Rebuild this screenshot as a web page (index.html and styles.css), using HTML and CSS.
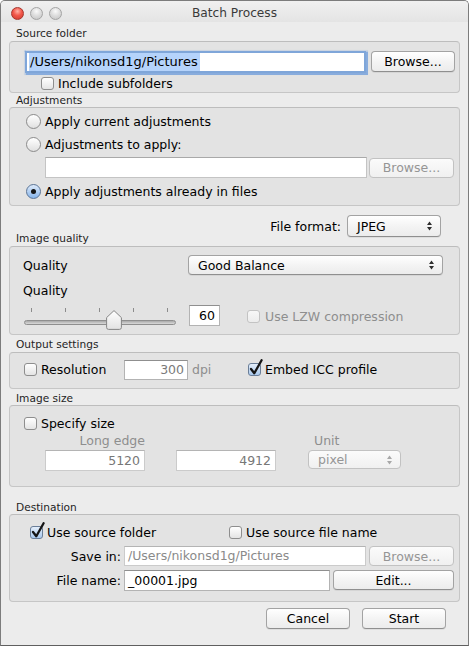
FILE: index.html
```html
<!DOCTYPE html>
<html lang="en">
<head>
<meta charset="utf-8">
<title>Batch Process</title>
<link rel="stylesheet" href="styles.css">
</head>
<body>
<div class="window">
  <div class="titlebar">
    <div class="lights"><span class="light close"></span><span class="light"></span><span class="light"></span></div>
    <div class="title">Batch Process</div>
    <div></div>
  </div>
  <div class="content">
    <div class="section-label l-source">Source folder</div>
    <div class="box box-source">
      <div class="row r-path">
        <div class="field focused path"><span class="sel">/Users/nikonsd1g/Pictures</span></div>
        <div class="btn browse">Browse...</div>
      </div>
      <div class="row r-sub"><span class="check"></span><span>Include subfolders</span></div>
    </div>

    <div class="section-label l-adjust">Adjustments</div>
    <div class="box box-adjust">
      <div class="row r-radio"><span class="radio"></span><span>Apply current adjustments</span></div>
      <div class="row r-radio r-gap6"><span class="radio"></span><span>Adjustments to apply:</span></div>
      <div class="row r-adjfield">
        <div class="field adjfield"></div>
        <div class="btn disabled browse2">Browse...</div>
      </div>
      <div class="row r-radio r-gap5"><span class="radio on"></span><span>Apply adjustments already in files</span></div>
    </div>

    <div class="format-row">
      <div class="section-label">Image quality</div>
      <div class="format">
        <span>File format:</span>
        <div class="btn popup jpeg"><span>JPEG</span><svg class="arrows" width="5" height="10" viewBox="0 0 5 10"><path d="M0 4 L2.5 0.5 L5 4 Z M0 6 L2.5 9.5 L5 6 Z"/></svg></div>
      </div>
    </div>
    <div class="box box-quality">
      <div class="row r-quality">
        <span>Quality</span>
        <div class="btn popup balance"><span>Good Balance</span><svg class="arrows" width="5" height="10" viewBox="0 0 5 10"><path d="M0 4 L2.5 0.5 L5 4 Z M0 6 L2.5 9.5 L5 6 Z"/></svg></div>
      </div>
      <div class="row r-quality2"><span>Quality</span></div>
      <div class="row r-slider">
        <div class="slider">
          <div class="ticks"><span></span><span></span><span></span><span></span><span></span></div>
          <div class="track"></div>
          <svg class="knob" width="16" height="20" viewBox="0 0 16 20">
            <defs><linearGradient id="kg" x1="0" y1="0" x2="0" y2="1"><stop offset="0" stop-color="#ffffff"/><stop offset="1" stop-color="#e2e2e2"/></linearGradient></defs>
            <path d="M8 0.6 L15.4 7.6 L15.4 17.4 Q15.4 19.4 13.4 19.4 L2.6 19.4 Q0.6 19.4 0.6 17.4 L0.6 7.6 Z" fill="url(#kg)" stroke="#858585" stroke-width="1"/>
          </svg>
        </div>
        <div class="field num">60</div>
        <span class="check disabled lzw"></span><span class="dim">Use LZW compression</span>
      </div>
    </div>

    <div class="section-label l-output">Output settings</div>
    <div class="box box-output">
      <div class="row r-output">
        <span class="check"></span><span class="res-label">Resolution</span>
        <div class="field dpi-field">300</div>
        <span class="dim dpi">dpi</span>
        <span class="check on"><svg width="14" height="18" viewBox="0 0 14 18"><path d="M2 10 L5.3 14.2 L12.6 1.2" fill="none" stroke="#151515" stroke-width="2.3" stroke-linecap="round" stroke-linejoin="round"/></svg></span><span>Embed ICC profile</span>
      </div>
    </div>

    <div class="section-label l-size">Image size</div>
    <div class="box box-size">
      <div class="row r-specify"><span class="check"></span><span>Specify size</span></div>
      <div class="row r-sizelabels dim"><span class="lbl-long">Long edge</span><span class="lbl-unit">Unit</span></div>
      <div class="row r-sizefields">
        <div class="field size-field">5120</div>
        <div class="field size-field second">4912</div>
        <div class="btn popup disabled unit"><span>pixel</span><svg class="arrows" width="5" height="10" viewBox="0 0 5 10"><path d="M0 4 L2.5 0.5 L5 4 Z M0 6 L2.5 9.5 L5 6 Z"/></svg></div>
      </div>
    </div>

    <div class="section-label l-dest">Destination</div>
    <div class="box box-dest">
      <div class="row r-dest1">
        <div class="row dest-opt1"><span class="check on"><svg width="14" height="18" viewBox="0 0 14 18"><path d="M2 10 L5.3 14.2 L12.6 1.2" fill="none" stroke="#151515" stroke-width="2.3" stroke-linecap="round" stroke-linejoin="round"/></svg></span><span>Use source folder</span></div>
        <div class="row"><span class="check"></span><span>Use source file name</span></div>
      </div>
      <div class="row r-save">
        <span class="form-label">Save in:</span>
        <div class="field save-field">/Users/nikonsd1g/Pictures</div>
        <div class="btn disabled browse3">Browse...</div>
      </div>
      <div class="row r-fname">
        <span class="form-label">File name:</span>
        <div class="field fname-field">_00001.jpg</div>
        <div class="btn edit">Edit...</div>
      </div>
    </div>

    <div class="row actions">
      <div class="btn action">Cancel</div>
      <div class="btn action">Start</div>
    </div>
  </div>
</div>
</body>
</html>
```

FILE: styles.css
```css
* { box-sizing: border-box; margin: 0; padding: 0; }
html, body { width: 469px; height: 646px; overflow: hidden; background: #ffffff; }
body { font-family: "DejaVu Sans", "Liberation Sans", sans-serif; font-size: 12.5px; color: #000; }

.window {
  width: 469px; height: 646px;
  border: 1px solid #7c7c7c;
  border-bottom-color: #5f5f5f;
  border-radius: 5px 5px 0 0;
  background: #ececec;
  overflow: hidden;
}

.titlebar {
  height: 21px;
  display: grid;
  grid-template-columns: 1fr auto 1fr;
  align-items: start;
  background: linear-gradient(#f0f0f0, #e4e4e4);
}
.lights { display: flex; gap: 6px; padding: 6px 0 0 10px; }
.light {
  width: 13px; height: 13px; border-radius: 50%;
  border: 1px solid #a4a4a4;
  background: radial-gradient(circle at 50% 30%, #fafafa 0, #dedede 45%, #c2c2c2 100%);
}
.light.close {
  border-color: #a8352c;
  background: radial-gradient(circle at 50% 30%, #ffb2a6 0, #f2574a 45%, #cc3a2f 100%);
}
.title { font-size: 12.2px; line-height: 21px; padding-top: 2px; color: #3a3a3a; }

.content { padding: 0 8px; }

.section-label { font-size: 10.6px; line-height: 15px; height: 15px; padding-left: 7px; color: #1e1e1e; }
.l-source { margin-top: 4px; }
.l-adjust { height: 14px; line-height: 14px; }
.l-output { margin-top: 2px; }
.l-size { margin-top: 2px; height: 14px; line-height: 14px; }
.l-dest { margin-top: 13px; height: 14px; line-height: 14px; }

.box {
  border: 1px solid #c6c6c6;
  border-top-color: #bdbdbd;
  border-radius: 4px;
  background: #e3e3e3;
}

.row { display: flex; align-items: center; white-space: nowrap; }

/* controls */
.field {
  background: #ffffff;
  border: 1px solid #b3b3b3;
  border-top-color: #8f8f8f;
  padding: 0 3px;
  line-height: 18px;
  overflow: hidden;
}
.btn {
  display: flex; align-items: center; justify-content: center;
  border: 1px solid #a3a3a3;
  border-bottom-color: #8f8f8f;
  border-radius: 4px;
  background: linear-gradient(#ffffff, #f3f3f3 55%, #ececec);
  box-shadow: 0 1px 0 rgba(0,0,0,0.06);
  flex: none;
}
.btn.disabled { color: #959595; border-color: #c2c2c2; background: linear-gradient(#fbfbfb, #f0f0f0); box-shadow: none; }
.popup { justify-content: space-between; padding: 0 8px 0 9px; }
.popup .arrows { fill: #2e2e2e; }
.popup.disabled .arrows { fill: #a8a8a8; }

.check {
  width: 13px; height: 13px; flex: none;
  border: 1px solid #8e8e8e;
  border-radius: 3px;
  background: linear-gradient(#ffffff, #e4e4e4);
  margin-right: 4px;
  position: relative;
}
.check.on { background: linear-gradient(#e4eefa, #a9c9ee); border-color: #6a7e98; }
.check.on svg { position: absolute; left: 0; top: -5px; }
.check.disabled { border-color: #c3c3c3; background: linear-gradient(#f7f7f7, #ececec); }
.dim { color: #8e8e8e; }

.radio {
  width: 15px; height: 15px; flex: none;
  border-radius: 50%;
  border: 1px solid #8b8b8b;
  background: linear-gradient(#ffffff, #e0e0e0);
  margin-right: 4px;
  display: flex; align-items: center; justify-content: center;
}
.radio.on { background: linear-gradient(#dfebfa, #86b4ea); border-color: #5a7496; }
.radio.on::after { content: ""; width: 5px; height: 5px; border-radius: 50%; background: #151515; }

/* source */
.box-source { height: 52px; padding-top: 9px; }
.r-path { height: 21px; padding-left: 16px; align-items: flex-start; }
.field.path {
  width: 339px; height: 20px; margin-top: 1px; padding-left: 2px;
  font-size: 13px;
  box-shadow: 0 0 0 1px #7fa6d9, 0 0 1px 2.5px rgba(106,154,219,0.75);
  border-color: #7fa6d9;
}
.sel { display: inline-block; background: #b5d3fb; line-height: 18px; padding: 0 2px 0 1px; }
.browse { width: 84px; height: 21px; margin-left: 6px; }
.r-sub { height: 17px; margin-top: 3px; padding-left: 31px; }

/* adjustments */
.box-adjust { height: 99px; padding-top: 5px; }
.r-radio { height: 17px; padding-left: 16px; }
.r-gap6 { margin-top: 6px; }
.r-gap5 { margin-top: 5px; }
.r-adjfield { height: 21px; margin-top: 4px; padding-left: 35px; }
.adjfield { width: 322px; height: 21px; border-color: #c4c4c4; border-top-color: #a9a9a9; }
.browse2 { width: 85px; height: 20px; margin-left: 2px; }

/* format + quality */
.format-row { height: 40px; display: flex; justify-content: space-between; align-items: flex-end; }
.format { align-self: flex-start; margin-top: 9px; margin-right: 19px; display: flex; align-items: center; }
.jpeg { width: 94px; height: 22px; margin-left: 6px; }

.box-quality { height: 89px; padding-top: 8px; }
.r-quality { height: 20px; padding-left: 13px; }
.balance { width: 255px; height: 20px; margin-left: auto; margin-right: 16px; }
.r-quality2 { height: 17px; margin-top: 7px; padding-left: 13px; }
.r-slider { height: 26px; margin-top: 4px; padding-left: 14px; align-items: flex-start; }
.slider { position: relative; width: 152px; height: 26px; flex: none; }
.ticks { display: flex; gap: 33px; padding: 5px 0 0 7px; height: 9px; }
.ticks span { width: 1px; height: 4px; background: #8c8c8c; }
.track {
  margin-top: 8px; height: 5px; border-radius: 3px;
  border: 1px solid #8e8e8e;
  background: linear-gradient(#a9a9a9, #d9d9d9);
}
.knob { position: absolute; left: 82px; top: 7px; }
.num { width: 31px; height: 21px; margin: 2px 0 0 13px; text-align: right; padding-right: 4px; line-height: 19px; }
.lzw { margin-left: 27px; margin-right: 5px; align-self: center; margin-top: 1px; }
.r-slider .dim { align-self: center; margin-top: 1px; }

/* output */
.box-output { height: 37px; padding-bottom: 2px; }
.r-output { height: 33px; padding-left: 14px; }
.res-label { width: 83px; }
.dpi-field { width: 64px; height: 20px; text-align: right; padding-right: 3px; color: #7a7a7a; }
.dpi { width: 56px; margin-left: 4px; }

/* size */
.box-size { height: 82px; padding-top: 9px; }
.r-specify { height: 17px; padding-left: 14px; }
.r-sizelabels { height: 15px; margin-top: 1px; padding-left: 35px; }
.lbl-long { width: 100px; text-align: right; }
.lbl-unit { margin-left: 163px; padding-left: 6px; }
.r-sizefields { height: 21px; margin-top: 2px; padding-left: 35px; align-items: flex-start; }
.size-field { width: 100px; height: 21px; text-align: right; padding-right: 4px; line-height: 19px; color: #777777; border-color: #cbcbcb; border-top-color: #b4b4b4; }
.size-field.second { margin-left: 31px; }
.unit { width: 93px; height: 19px; margin-left: 32px; }

/* destination */
.box-dest { height: 88px; padding-top: 9px; }
.r-dest1 { height: 17px; padding-left: 20px; }
.dest-opt1 { width: 199px; }
.form-label { width: 111px; text-align: right; flex: none; }
.r-save { height: 20px; margin-top: 5px; }
.save-field { width: 242px; height: 20px; margin-left: 3px; color: #8a8a8a; border-color: #cbcbcb; border-top-color: #b4b4b4; }
.browse3 { width: 85px; height: 20px; margin-left: 3px; }
.r-fname { height: 21px; margin-top: 4px; align-items: flex-start; }
.r-fname .form-label { line-height: 21px; }
.fname-field { width: 206px; height: 21px; margin-left: 3px; line-height: 19px; }
.edit { width: 121px; height: 20px; margin-left: 3px; }

/* actions */
.actions { height: 21px; margin-top: 6px; justify-content: flex-end; gap: 12px; padding-right: 14px; }
.action { width: 84px; height: 21px; }
```
